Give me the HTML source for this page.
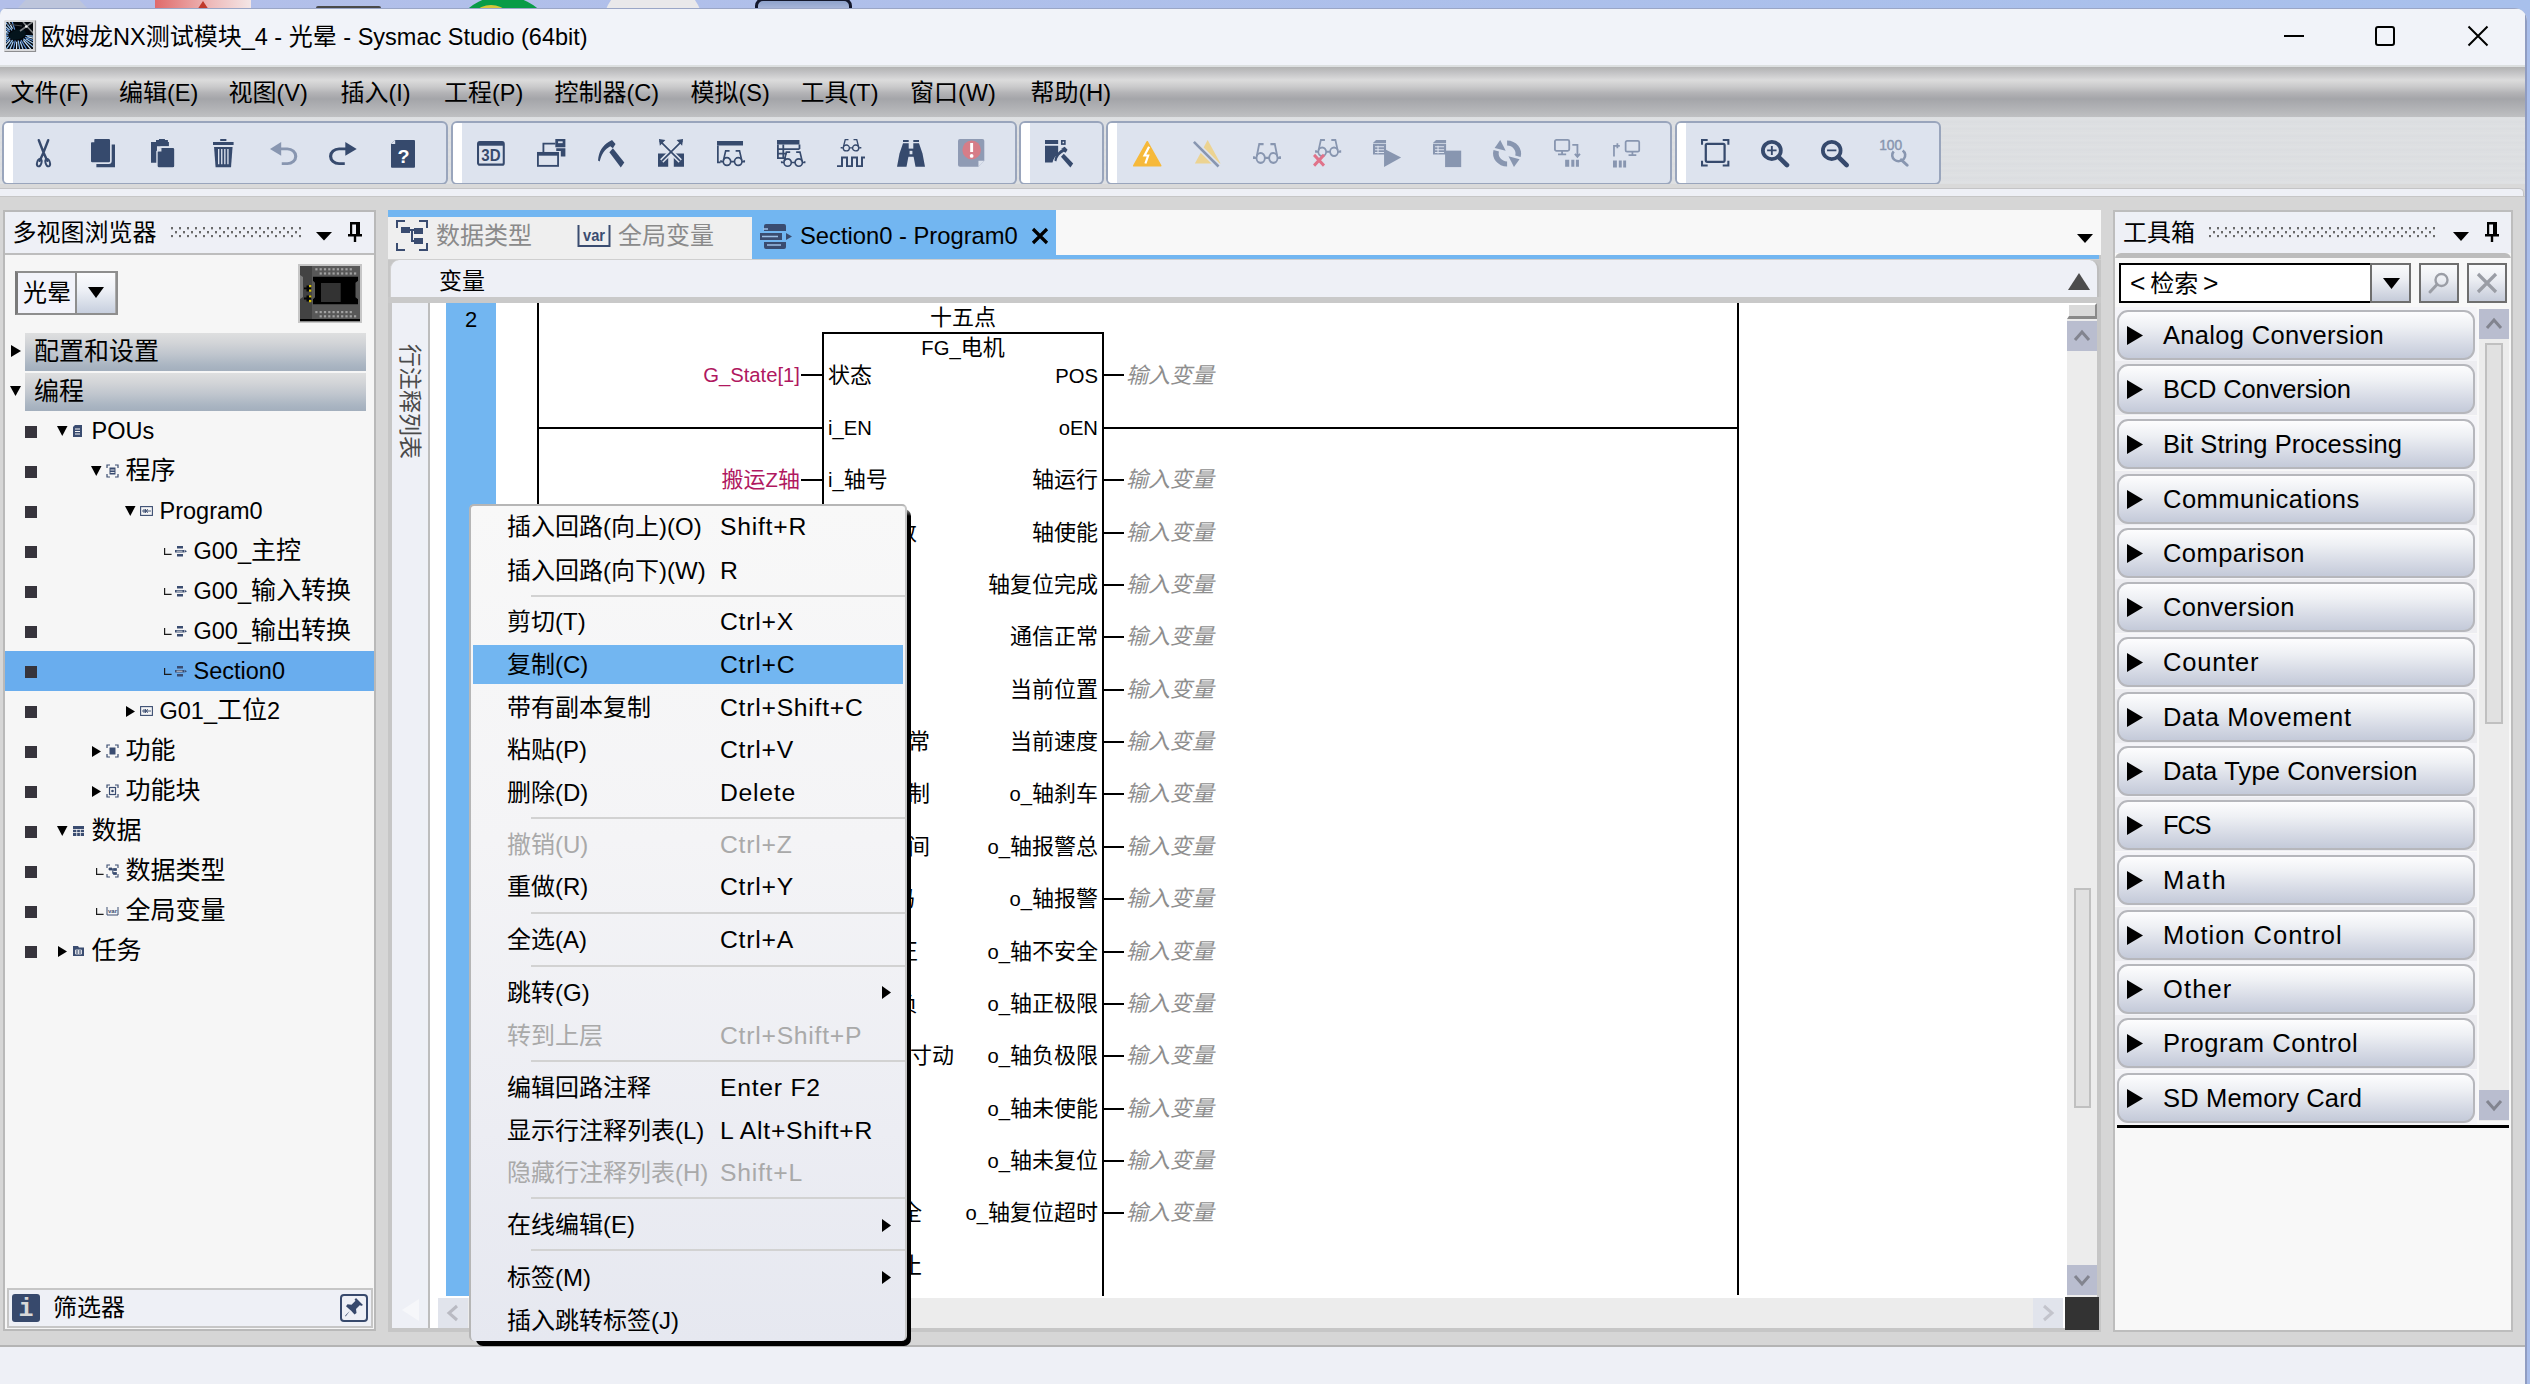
<!DOCTYPE html><html lang="zh-CN"><head><meta charset="utf-8"><title>Sysmac Studio</title><style>
html,body{margin:0;padding:0}
body{width:2530px;height:1384px;overflow:hidden;position:relative;background:#a9bde9;font-family:"Liberation Sans","Noto Sans CJK SC",sans-serif;}
div,svg{position:absolute;box-sizing:border-box}
svg{overflow:visible}
.t{white-space:nowrap}
#win{left:0;top:0;width:2530px;height:1384px;clip-path:inset(8px 3px 0px 0px round 7px 13px 0 0);background:#d6d6d6}
</style></head><body><div style="left:0;top:0;width:2530px;height:10px;background:linear-gradient(90deg,#b3bfe9,#a8c0ec)"><div style="left:17px;top:0;width:71px;height:9px;background:#bdc5dc;clip-path:polygon(12% 0,88% 0,100% 100%,0 100%)"></div><div style="left:155px;top:0;width:96px;height:10px;background:linear-gradient(90deg,#e06a6a,#eebcbc 60%,#f3e6e6)"></div><div style="left:197px;top:1px;width:12px;height:9px;background:#c0392b;clip-path:polygon(50% 0,100% 100%,0 100%)"></div><div style="left:316px;top:6px;width:65px;height:4px;background:#4a4a4a;border-radius:2px 2px 0 0"></div><div style="left:449px;top:-3.600px;width:108px;height:108px;background:#089c47;border-radius:50%"></div><div style="left:466px;top:5px;width:50px;height:50px;background:#d6c63a;border-radius:50%"></div><div style="left:601.500px;top:-22px;width:102px;height:102px;background:#e9e8ea;border-radius:50%"></div><div style="left:755px;top:-2px;width:97px;height:30px;background:linear-gradient(#8ea2cb,#a9b7db 8px);border:3px solid #14182c;border-radius:8px"></div></div><div id="win"><div style="left:0px;top:8px;width:2530px;height:1px;background:#9aa6c6"></div><div style="left:0px;top:9px;width:2530px;height:57px;background:#f1f3f9"></div><svg style="left:4px;top:20px" width="32" height="32" viewBox="0 0 32 32"><rect x="0" y="0" width="32" height="32" rx="1.500" fill="#d9d9db"/><path d="M0.500 31.500H31.500V0.500" fill="none" stroke="#8e8e90" stroke-width="1.200"/><clipPath id="apc"><rect x="2" y="2" width="27" height="27"/></clipPath><g clip-path="url(#apc)"><rect x="2" y="2" width="27" height="27" fill="#03060c"/><path d="M21.7 15.5L42.9 17.1" stroke="#8fc0f2" stroke-width="1.2"/><path d="M23.3 16.7L42.0 21.0" stroke="#cfe6fb" stroke-width="1.2"/><path d="M21.0 17.3L40.4 24.8" stroke="#5f92d8" stroke-width="1.2"/><path d="M21.8 18.8L37.9 28.4" stroke="#a9d0f5" stroke-width="1.2"/><path d="M19.4 18.8L34.8 31.5" stroke="#8fc0f2" stroke-width="1.2"/><path d="M19.4 20.4L31.1 34.2" stroke="#cfe6fb" stroke-width="1.2"/><path d="M17.0 20.0L26.8 36.3" stroke="#5f92d8" stroke-width="1.2"/><path d="M16.2 21.5L22.2 37.9" stroke="#a9d0f5" stroke-width="1.2"/><path d="M14.2 20.5L17.3 38.8" stroke="#8fc0f2" stroke-width="1.2"/><path d="M12.7 21.8L12.3 39.0" stroke="#cfe6fb" stroke-width="1.2"/><path d="M11.3 20.5L7.3 38.6" stroke="#5f92d8" stroke-width="1.2"/><path d="M9.3 21.4L2.4 37.5" stroke="#a9d0f5" stroke-width="1.2"/><path d="M8.6 19.8L-2.1 35.7" stroke="#8fc0f2" stroke-width="1.2"/><path d="M6.2 20.2L-6.2 33.4" stroke="#cfe6fb" stroke-width="1.2"/><path d="M6.4 18.6L-9.8 30.6" stroke="#5f92d8" stroke-width="1.2"/><path d="M3.9 18.5L-12.7 27.4" stroke="#a9d0f5" stroke-width="1.2"/><path d="M4.9 17.0L-14.9 23.8" stroke="#8fc0f2" stroke-width="1.2"/><path d="M2.6 16.4L-16.4 19.9" stroke="#cfe6fb" stroke-width="1.2"/><path d="M4.3 15.2L-17.0 15.9" stroke="#5f92d8" stroke-width="1.2"/><path d="M2.5 14.1L-16.8 11.9" stroke="#a9d0f5" stroke-width="1.2"/><path d="M4.6 13.4L-15.7 8.0" stroke="#8fc0f2" stroke-width="1.2"/><path d="M3.5 12.0L-13.8 4.3" stroke="#cfe6fb" stroke-width="1.2"/><path d="M5.9 11.7L-11.2 0.8" stroke="#5f92d8" stroke-width="1.2"/><path d="M5.6 10.1L-7.9 -2.2" stroke="#a9d0f5" stroke-width="1.2"/><path d="M8.0 10.4L-4.0 -4.8" stroke="#8fc0f2" stroke-width="1.2"/><path d="M8.5 8.8L0.3 -6.8" stroke="#cfe6fb" stroke-width="1.2"/><path d="M10.7 9.6L5.0 -8.1" stroke="#5f92d8" stroke-width="1.2"/><ellipse cx="13.500" cy="14.500" rx="8.500" ry="5" fill="#04141c" transform="rotate(-15 13.500 14.500)"/><path d="M16 11L30 1M19 2L31 15" stroke="#7e8084" stroke-width="1.600"/><circle cx="22.300" cy="6.500" r="1.300" fill="#f2f2f2"/><path d="M3 4L18 6" stroke="#4a4c50" stroke-width="1"/></g></svg><div class="t" style="left:41px;top:19.0px;font-size:24px;line-height:36px;color:#000;">欧姆龙<span style="font-size:0.98em">NX</span>测试模块<span style="font-size:0.98em">_4 - </span>光晕<span style="font-size:0.98em"> - Sysmac Studio (64bit)</span></div><div style="left:2284px;top:35px;width:20px;height:2px;background:#000"></div><div style="left:2375px;top:26px;width:20px;height:20px;border:2px solid #000;border-radius:3px"></div><svg style="left:2467px;top:25px;" width="22" height="22" viewBox="0 0 22 22"><path d="M1.5 1.5L20.5 20.5M20.5 1.5L1.5 20.5" stroke="#000" stroke-width="2" fill="none"/></svg><div style="left:0px;top:65px;width:2530px;height:2px;background:#dcdfe0"></div><div style="left:0px;top:67px;width:2530px;height:50px;background:linear-gradient(#b2b2b2 0%,#c4c4c6 12%,#dcdcdc 26%,#c9c9ca 40%,#b3b3b6 52%,#a4a5a9 64%,#b1b2b5 82%,#bfc0c2 100%)"></div><div class="t" style="left:10.5px;top:75.0px;font-size:24px;line-height:36px;color:#000;">文件<span style="font-size:0.98em">(F)</span></div><div class="t" style="left:119px;top:75.0px;font-size:24px;line-height:36px;color:#000;">编辑<span style="font-size:0.98em">(E)</span></div><div class="t" style="left:228.5px;top:75.0px;font-size:24px;line-height:36px;color:#000;">视图<span style="font-size:0.98em">(V)</span></div><div class="t" style="left:340.5px;top:75.0px;font-size:24px;line-height:36px;color:#000;">插入<span style="font-size:0.98em">(I)</span></div><div class="t" style="left:444px;top:75.0px;font-size:24px;line-height:36px;color:#000;">工程<span style="font-size:0.98em">(P)</span></div><div class="t" style="left:554.5px;top:75.0px;font-size:24px;line-height:36px;color:#000;">控制器<span style="font-size:0.98em">(C)</span></div><div class="t" style="left:690.5px;top:75.0px;font-size:24px;line-height:36px;color:#000;">模拟<span style="font-size:0.98em">(S)</span></div><div class="t" style="left:800.5px;top:75.0px;font-size:24px;line-height:36px;color:#000;">工具<span style="font-size:0.98em">(T)</span></div><div class="t" style="left:910px;top:75.0px;font-size:24px;line-height:36px;color:#000;">窗口<span style="font-size:0.98em">(W)</span></div><div class="t" style="left:1030.5px;top:75.0px;font-size:24px;line-height:36px;color:#000;">帮助<span style="font-size:0.98em">(H)</span></div><div style="left:0px;top:117px;width:2530px;height:71px;background:repeating-linear-gradient(180deg,#dcdee1 0,#dfe1e3 2px,#dbdde0 5px,#dee0e2 7px)"></div><div style="left:2px;top:121px;width:446px;height:64px;background:#dde3ee;border:2px solid #99a5bc;border-radius:6px;overflow:hidden"><div style="left:0;top:0;width:9px;height:60px;background:#fff"></div></div><div style="left:451px;top:121px;width:566px;height:64px;background:#dde3ee;border:2px solid #99a5bc;border-radius:6px;overflow:hidden"><div style="left:0;top:0;width:9px;height:60px;background:#fff"></div></div><div style="left:1019px;top:121px;width:85px;height:64px;background:#dde3ee;border:2px solid #99a5bc;border-radius:6px;overflow:hidden"><div style="left:0;top:0;width:9px;height:60px;background:#fff"></div></div><div style="left:1106px;top:121px;width:566px;height:64px;background:#dde3ee;border:2px solid #99a5bc;border-radius:6px;overflow:hidden"><div style="left:0;top:0;width:9px;height:60px;background:#fff"></div></div><div style="left:1675px;top:121px;width:266px;height:64px;background:#dde3ee;border:2px solid #99a5bc;border-radius:6px;overflow:hidden"><div style="left:0;top:0;width:9px;height:60px;background:#fff"></div></div><svg style="left:35.5px;top:139px" width="15.0" height="28.3" viewBox="10.0 2.7 16.0 30.2" preserveAspectRatio="none"><path d="M13 4 L18 17 L23 4 M18 17 L14 26 M18 17 L22 26" stroke="#364a6d" stroke-width="2.6" fill="none" stroke-linecap="round"/><ellipse cx="13.5" cy="28" rx="2.3" ry="4" fill="none" stroke="#364a6d" stroke-width="2" transform="rotate(18 13.5 28)"/><ellipse cx="22.5" cy="28" rx="2.3" ry="4" fill="none" stroke="#364a6d" stroke-width="2" transform="rotate(-18 22.5 28)"/></svg><svg style="left:91px;top:139px" width="24" height="28.3" viewBox="6.8 4.8 23.2 27.2" preserveAspectRatio="none"><path d="M12 10h18v22H12z" fill="#364a6d"/><path d="M10 4h14a2 2 0 0 1 2 2v20a2 2 0 0 1-2 2H8a2 2 0 0 1-2-2V8z" fill="#364a6d" stroke="#dde3ee" stroke-width="1.6"/><path d="M6 8l4-4v4z" fill="#dde3ee"/></svg><svg style="left:151.3px;top:139px" width="23.2" height="28.3" viewBox="6.0 4.0 23.3 27.3" preserveAspectRatio="none"><path d="M6 7h5V5h3V4h6v1h3v2h1v4H6z" fill="#364a6d"/><path d="M6 7h6v20H6z" fill="#364a6d"/><path d="M16 12h12a2 2 0 0 1 2 2v16a2 2 0 0 1-2 2H14a2 2 0 0 1-2-2V16z" fill="#364a6d" stroke="#dde3ee" stroke-width="1.4"/><path d="M12.5 16l4-4v4z" fill="#dde3ee"/></svg><svg style="left:212.7px;top:139px" width="20.6" height="28.3" viewBox="8.0 4.0 20.0 28.0" preserveAspectRatio="none"><path d="M8 7h20v3H8zM15 4h6v2h-6z" fill="#364a6d"/><path d="M9 12h18l-1.5 20h-15z" fill="#364a6d"/><path d="M13.5 14v15M16.5 14v15M19.5 14v15M22.5 14v15" stroke="#dde3ee" stroke-width="1.3"/></svg><svg style="left:270px;top:142.4px" width="27.3" height="23.1" viewBox="4.5 5.0 24.4 23.4" preserveAspectRatio="none"><path d="M13 12h7a7.500 7.500 0 0 1 0 15h-5" fill="none" stroke="#8896b0" stroke-width="2.800"/><path d="M4.500 12l10-7v14z" fill="#8896b0"/></svg><svg style="left:328.7px;top:142.4px" width="27.7" height="23.1" viewBox="7.1 5.0 24.4 23.4" preserveAspectRatio="none"><path d="M23 12h-7a7.500 7.500 0 0 0 0 15h5" fill="none" stroke="#364a6d" stroke-width="2.800"/><path d="M31.500 12l-10-7v14z" fill="#364a6d"/></svg><svg style="left:391px;top:139.6px" width="24" height="27.7" viewBox="6.0 4.0 23.0 28.0" preserveAspectRatio="none"><path d="M10 4h18a1 1 0 0 1 1 1v26a1 1 0 0 1-1 1H7a1 1 0 0 1-1-1V8z" fill="#364a6d"/><path d="M6 8l4-4v4z" fill="#dde3ee"/><text x="18" y="27" font-family="Liberation Sans,sans-serif" font-weight="bold" font-size="19" fill="#fff" text-anchor="middle">?</text></svg><svg style="left:477px;top:141.2px" width="27.8" height="24.8" viewBox="1.8 4.8 32.400000000000006 27.400000000000002" preserveAspectRatio="none"><rect x="3" y="6" width="30" height="25" rx="2" fill="none" stroke="#364a6d" stroke-width="2.4"/><rect x="3" y="6" width="30" height="4" fill="#364a6d"/><text x="18" y="27" font-family="Liberation Sans,sans-serif" font-weight="bold" font-size="17.500" fill="#364a6d" text-anchor="middle">3D</text></svg><svg style="left:536.8px;top:139.4px" width="28.4" height="27.8" viewBox="4.0 3.0 31.0 30.0" preserveAspectRatio="none"><path d="M24 3h11v9H24z M25 13h10v9h-5v-6h-5z" fill="#364a6d"/><rect x="27" y="5.5" width="5" height="2" fill="#dde3ee"/><path d="M11 17V8h13" fill="none" stroke="#364a6d" stroke-width="2"/><rect x="5" y="18" width="22" height="14" fill="#dde3ee" stroke="#364a6d" stroke-width="2"/><rect x="5" y="18" width="22" height="3" fill="#364a6d"/></svg><svg style="left:597.7px;top:139.6px" width="26.3" height="27.6" viewBox="5.0 3.0 30.0 27.0" preserveAspectRatio="none"><path d="M17 5l4-2 4 4-3 4-3-2c-6 3-10 7-12 15l-2-1C6 14 10 9 17 5z" fill="#364a6d"/><path d="M18 15l4-4 13 14-4 5z" fill="#364a6d"/></svg><svg style="left:658px;top:139.4px" width="26" height="27.8" viewBox="4.0 3.0 28.0 29.0" preserveAspectRatio="none"><path d="M4 18h11v14H4zM21 18h11v14H21z" fill="#364a6d"/><path d="M8 26L30 5M28 26L6 5" stroke="#dde3ee" stroke-width="5" fill="none"/><path d="M8 26L30 5M28 26L6 5" stroke="#364a6d" stroke-width="1.8" fill="none"/><path d="M31 3l-1 7-6-6zM5 3l1 7 6-6z" fill="#364a6d"/></svg><svg style="left:716.9px;top:141px" width="28.1" height="25.3" viewBox="3.0 5.0 32.4 28.299999999999997" preserveAspectRatio="none"><path d="M3 5h30v5H3z" fill="#364a6d"/><path d="M4 10v19h3" fill="none" stroke="#364a6d" stroke-width="2"/><g transform="translate(21 24) scale(1.0)" fill="none" stroke="#364a6d" stroke-width="1.9"><circle cx="-6.5" cy="4" r="4.3"/><circle cx="6.5" cy="4" r="4.3"/><path d="M-2.2 4h4.4M-10.8 4h-2.6v-1.5M10.8 4h2.6v-1.5M-10.5 2.5L-8 -8h4.5M10.5 2.5L8 -8h-4.5"/></g></svg><svg style="left:776.7px;top:139.9px" width="28.5" height="27.1" viewBox="3.0 4.0 31.700000000000003 29.799999999999997" preserveAspectRatio="none"><path d="M3 4h25v5H3z" fill="#364a6d"/><path d="M4 9v15h9M4 14h24M4 19h10M10 9v15M28 9v5" fill="none" stroke="#364a6d" stroke-width="2"/><g transform="translate(21 25) scale(0.95)" fill="none" stroke="#364a6d" stroke-width="1.9"><circle cx="-6.5" cy="4" r="4.3"/><circle cx="6.5" cy="4" r="4.3"/><path d="M-2.2 4h4.4M-10.8 4h-2.6v-1.5M10.8 4h2.6v-1.5M-10.5 2.5L-8 -8h4.5M10.5 2.5L8 -8h-4.5"/></g></svg><svg style="left:837px;top:138.9px" width="28" height="28.1" viewBox="4.0 2.5 28.0 29.5" preserveAspectRatio="none"><g transform="translate(18 9) scale(0.72)" fill="none" stroke="#364a6d" stroke-width="1.9"><circle cx="-6.5" cy="4" r="4.3"/><circle cx="6.5" cy="4" r="4.3"/><path d="M-2.2 4h4.4M-10.8 4h-2.6v-1.5M10.8 4h2.6v-1.5M-10.5 2.5L-8 -8h4.5M10.5 2.5L8 -8h-4.5"/></g><path d="M4 31h5v-9h5v9h5v-9h5v9h5v-9h3" fill="none" stroke="#364a6d" stroke-width="2"/></svg><svg style="left:897px;top:139.9px" width="28" height="26.8" viewBox="4.0 4.0 28.0 28.0" preserveAspectRatio="none"><path d="M10 4h5.700v2H10zM20.300 4H26v2h-5.700z" fill="#364a6d"/><path d="M10 7.500h5.700V20L13.500 32H4l2.500-14zM26 7.500h-5.700V20L22.500 32H32l-2.500-14z" fill="#364a6d"/><rect x="15" y="13" width="6" height="8.500" fill="#364a6d"/><rect x="16.600" y="15.300" width="2.800" height="3.600" fill="#dde3ee"/></svg><svg style="left:957.7px;top:139.2px" width="26.3" height="27.8" viewBox="4.0 4.0 27.0 28.0" preserveAspectRatio="none"><path d="M6 4h23a2 2 0 0 1 2 2v20l-6 6H6a2 2 0 0 1-2-2V6a2 2 0 0 1 2-2z" fill="#8f9bb4"/><path d="M25 32v-6h6z" fill="#dde3ee"/><circle cx="18" cy="15" r="9.5" fill="#d67d88"/><path d="M18 8v9" stroke="#fff" stroke-width="3"/><circle cx="18" cy="21" r="1.9" fill="#fff"/></svg><svg style="left:1044.8px;top:139.6px" width="28.2" height="27.4" viewBox="5.0 4.0 30.0 28.0" preserveAspectRatio="none"><path d="M5 4h14v4H5zM5 10h14v8c-3 2-5 5-6 9H5z" fill="#364a6d"/><rect x="22" y="4" width="5" height="5" fill="#364a6d"/><rect x="23.7" y="5.7" width="1.6" height="1.6" fill="#dde3ee"/><path d="M22 13l4-2 3 3-2 3-2-1c-4 2-7 5-8 10l-2-1c1-6 4-9 9-12z" fill="#364a6d"/><path d="M22 21l3-3 10 10-3 4z" fill="#364a6d"/></svg><svg style="left:1132.7px;top:140.6px" width="28.5" height="25.6" viewBox="2.5 2.5 31.0 29.0" preserveAspectRatio="none"><path d="M18 3.5L32.5 30.5H3.5z" fill="#f6b93a" stroke="#f6b93a" stroke-width="2" stroke-linejoin="round"/><path d="M20 9l-5 10h4l-3 9" stroke="#fff" stroke-width="2.4" fill="none"/></svg><svg style="left:1193.2px;top:139.6px" width="27.5" height="27.4" viewBox="4.1 3.1 27.9 27.799999999999997" preserveAspectRatio="none"><path d="M19 3L32 27H6z" fill="#ecd391"/><path d="M4 4L30 30" stroke="#dde3ee" stroke-width="6"/><path d="M5 5L30 30" stroke="#8896b0" stroke-width="2.6"/></svg><svg style="left:1253px;top:142.8px" width="28" height="21.0" viewBox="-1.4 3.9 38.8 24.6" preserveAspectRatio="none"><g transform="translate(18 16) scale(1.35)" fill="none" stroke="#8896b0" stroke-width="1.9"><circle cx="-6.5" cy="4" r="4.3"/><circle cx="6.5" cy="4" r="4.3"/><path d="M-2.2 4h4.4M-10.8 4h-2.6v-1.5M10.8 4h2.6v-1.5M-10.5 2.5L-8 -8h4.5M10.5 2.5L8 -8h-4.5"/></g></svg><svg style="left:1312.7px;top:139.2px" width="28.2" height="27.8" viewBox="3.7 1.1 34.099999999999994 31.199999999999996" preserveAspectRatio="none"><g transform="translate(22 11) scale(1.1)" fill="none" stroke="#8896b0" stroke-width="1.9"><circle cx="-6.5" cy="4" r="4.3"/><circle cx="6.5" cy="4" r="4.3"/><path d="M-2.2 4h4.4M-10.8 4h-2.6v-1.5M10.8 4h2.6v-1.5M-10.5 2.5L-8 -8h4.5M10.5 2.5L8 -8h-4.5"/></g><path d="M5 19l12 12M17 19L5 31" stroke="#e0738a" stroke-width="3.6"/></svg><svg style="left:1372.9px;top:139.9px" width="28.1" height="27.1" viewBox="5.0 3.0 28.0 28.0" preserveAspectRatio="none"><path d="M8 3h10v3H8zM5 6l3-3v3zM5 7h13v11H5z" fill="#8896b0"/><path d="M7 10h9M7 13h9M7 16h9M10 9v8" stroke="#dde3ee" stroke-width="1.1"/><path d="M16 12l17 9-17 10z" fill="#8896b0"/></svg><svg style="left:1433px;top:139.9px" width="28.2" height="27.1" viewBox="5.0 3.0 28.0 28.0" preserveAspectRatio="none"><path d="M8 3h10v3H8zM5 6l3-3v3zM5 7h13v11H5z" fill="#8896b0"/><path d="M7 10h9M7 13h9M7 16h9M10 9v8" stroke="#dde3ee" stroke-width="1.1"/><rect x="17" y="14" width="16" height="17" fill="#8896b0"/></svg><svg style="left:1492.8px;top:139.9px" width="28.2" height="27.1" viewBox="5.0 4.4 26.0 27.200000000000003" preserveAspectRatio="none"><path d="M18 5a13 13 0 0 1 12.5 16.500l-5-1.500A8 8 0 0 0 18 10z" fill="#8896b0"/><path d="M18 3v12l-8-7z" fill="#8896b0" transform="rotate(-25 18 18)"/><path d="M18 31a13 13 0 0 1-12.500-16.500l5 1.500A8 8 0 0 0 18 26z" fill="#8896b0"/><path d="M18 33v-12l8 7z" fill="#8896b0" transform="rotate(-25 18 18)"/></svg><svg style="left:1553.7px;top:139.2px" width="26.7" height="27.8" viewBox="2.1 3.1 26.099999999999998 27.9" preserveAspectRatio="none"><rect x="3" y="4" width="14" height="11" rx="1.5" fill="none" stroke="#8896b0" stroke-width="1.8"/><path d="M6 18.5h8M10 15v3" stroke="#8896b0" stroke-width="1.8"/><path d="M13 24h4v7h-4zM19 24h3v7h-3zM23.5 24h3v7h-3z" fill="#8896b0"/><path d="M20 9h5v11M22.500 18l2.500 3 2.500-3" fill="none" stroke="#8896b0" stroke-width="1.8"/></svg><svg style="left:1613.4px;top:139.6px" width="27.1" height="27.4" viewBox="5.0 3.1 27.9 27.9" preserveAspectRatio="none"><rect x="18" y="4" width="14" height="11" rx="1.5" fill="none" stroke="#8896b0" stroke-width="1.8"/><path d="M21 18.5h8M25 15v3" stroke="#8896b0" stroke-width="1.8"/><path d="M5 24h4v7h-4zM11 24h3v7h-3zM15.5 24h3v7h-3z" fill="#8896b0"/><path d="M6 20V9h6M9.500 6.500v5" fill="none" stroke="#8896b0" stroke-width="1.8"/></svg><svg style="left:1700.8px;top:139.4px" width="28.4" height="27.6" viewBox="2.9 3.9 30.200000000000003 29.200000000000003" preserveAspectRatio="none"><rect x="8" y="9" width="20" height="19" rx="1.5" fill="none" stroke="#364a6d" stroke-width="2.4"/><path d="M4 10V5h6M26 5h6v5M32 27v5h-6M10 32H4v-5" fill="none" stroke="#364a6d" stroke-width="2.2"/></svg><svg style="left:1761px;top:139.7px" width="28.3" height="27.3" viewBox="3.5 2.5 30.0 30.0" preserveAspectRatio="none"><circle cx="15" cy="14" r="9.5" fill="none" stroke="#364a6d" stroke-width="4"/><path d="M22 21l9 9" stroke="#364a6d" stroke-width="5" stroke-linecap="round"/><path d="M10 14h10M15 9v10" stroke="#364a6d" stroke-width="2"/></svg><svg style="left:1821px;top:139.7px" width="28" height="27.3" viewBox="3.5 2.5 30.0 30.0" preserveAspectRatio="none"><circle cx="15" cy="14" r="9.5" fill="none" stroke="#364a6d" stroke-width="4"/><path d="M22 21l9 9" stroke="#364a6d" stroke-width="5" stroke-linecap="round"/><path d="M10 14h10" stroke="#364a6d" stroke-width="2"/></svg><svg style="left:1880.3px;top:139.4px" width="28.7" height="27.6" viewBox="3.8 3.6 28.7 29.9" preserveAspectRatio="none"><text x="3" y="15" font-family="Liberation Sans,sans-serif" font-size="16" fill="#8896b0" stroke="#8896b0" stroke-width=".500" textLength="23" lengthAdjust="spacingAndGlyphs">100</text><path d="M17.500 17a6.500 6.500 0 1 0 9-1" fill="none" stroke="#8896b0" stroke-width="2.6"/><path d="M25 26l6 6" stroke="#8896b0" stroke-width="3" stroke-linecap="round"/></svg><div style="left:0px;top:184px;width:2530px;height:5px;background:#d9d9d9"></div><div style="left:0px;top:188px;width:2524px;height:9px;background:#eef0f6;border-radius:0 5px 0 0;border-top:1px solid #c4c4c6;border-right:1px solid #c4c4c6"></div><div style="left:0px;top:196px;width:2530px;height:1px;background:#c6c6c6"></div><div style="left:0px;top:197px;width:2530px;height:1200px;background:#d6d6d6"></div><div style="left:0px;top:1345px;width:2530px;height:2px;background:#b4b4b4"></div><div style="left:0px;top:1347px;width:2530px;height:40px;background:#eef0f6"></div><div style="left:2525px;top:9px;width:2px;height:1380px;background:#8f9cc2"></div><div style="left:3px;top:210px;width:373px;height:1121px;background:#f6f6f6;border:2px solid #b9b9b9"></div><div style="left:5px;top:212px;width:369px;height:41px;background:#eef0f6"></div><div style="left:5px;top:253px;width:369px;height:2px;background:#bdbdbd"></div><div class="t" style="left:12.5px;top:214.5px;font-size:24px;line-height:36px;color:#000;">多视图浏览器</div><svg style="left:171px;top:227.4px" width="130" height="11" viewBox="0 0 130 11"><defs><pattern id="dp171" width="8" height="8" patternUnits="userSpaceOnUse"><rect x="0" y="0" width="2" height="2.400" fill="#6a6a6a"/><rect x="4" y="4" width="2" height="2.400" fill="#6a6a6a"/></pattern></defs><rect width="130" height="10.400" fill="url(#dp171)"/></svg><svg style="left:316.0px;top:231.75px" width="16" height="8.5" viewBox="0 0 16 8.5"><path d="M0 0H16L8.0 8.5z" fill="#000"/></svg><svg style="left:347px;top:221px" width="16" height="22" viewBox="0 0 16 22"><path d="M3 1h10v12h2v2.500H9.200V21H6.800v-5.500H1V13h2z" fill="#000"/><rect x="5.200" y="3.500" width="3.800" height="9.500" fill="#eef0f6"/></svg><div style="left:15px;top:271px;width:103px;height:44px;background:#f2f3fa;border:2px solid #8e8e8e;border-left:3px solid #7a7a7a"></div><div style="left:75px;top:273px;width:41px;height:40px;background:linear-gradient(#fbfbfd,#eceff5 45%,#c7cfde);border-left:2px solid #8e8e8e;border-right:1px solid #aaa"></div><div class="t" style="left:23px;top:274.5px;font-size:24px;line-height:36px;color:#000;">光晕</div><svg style="left:88.0px;top:287.0px" width="16" height="11" viewBox="0 0 16 11"><path d="M0 0H16L8.0 11z" fill="#000"/></svg><svg style="left:298px;top:264px" width="64" height="59" viewBox="0 0 64 59"><rect x="0" y="0" width="64" height="59" fill="#c6c6c6"/><rect x="2" y="2" width="60" height="55" fill="#585858"/><rect x="2" y="2" width="12" height="55" fill="#434343"/><path d="M2 10l3 2v20l-3 2z" transform="translate(0 1) scale(1 1.000)" fill="#7c7c7c"/><rect x="17.3" y="4.2" width="2.200" height="2.200" fill="#a2a2a2"/><rect x="21.6" y="4.2" width="2.200" height="2.200" fill="#a2a2a2"/><rect x="25.9" y="4.2" width="2.200" height="2.200" fill="#a2a2a2"/><rect x="30.2" y="4.2" width="2.200" height="2.200" fill="#a2a2a2"/><rect x="34.5" y="4.2" width="2.200" height="2.200" fill="#a2a2a2"/><rect x="38.8" y="4.2" width="2.200" height="2.200" fill="#a2a2a2"/><rect x="43.1" y="4.2" width="2.200" height="2.200" fill="#a2a2a2"/><rect x="47.4" y="4.2" width="2.200" height="2.200" fill="#a2a2a2"/><rect x="51.7" y="4.2" width="2.200" height="2.200" fill="#a2a2a2"/><rect x="21.6" y="8.4" width="2.200" height="2.200" fill="#a2a2a2"/><rect x="25.9" y="8.4" width="2.200" height="2.200" fill="#a2a2a2"/><rect x="30.2" y="8.4" width="2.200" height="2.200" fill="#a2a2a2"/><rect x="34.5" y="8.4" width="2.200" height="2.200" fill="#a2a2a2"/><rect x="38.8" y="8.4" width="2.200" height="2.200" fill="#a2a2a2"/><rect x="43.1" y="8.4" width="2.200" height="2.200" fill="#a2a2a2"/><rect x="47.4" y="8.4" width="2.200" height="2.200" fill="#a2a2a2"/><rect x="51.7" y="8.4" width="2.200" height="2.200" fill="#a2a2a2"/><rect x="56.0" y="8.4" width="2.200" height="2.200" fill="#a2a2a2"/><rect x="17.3" y="47" width="2.200" height="2.200" fill="#a2a2a2"/><rect x="21.6" y="47" width="2.200" height="2.200" fill="#a2a2a2"/><rect x="25.9" y="47" width="2.200" height="2.200" fill="#a2a2a2"/><rect x="30.2" y="47" width="2.200" height="2.200" fill="#a2a2a2"/><rect x="34.5" y="47" width="2.200" height="2.200" fill="#a2a2a2"/><rect x="38.8" y="47" width="2.200" height="2.200" fill="#a2a2a2"/><rect x="43.1" y="47" width="2.200" height="2.200" fill="#a2a2a2"/><rect x="47.4" y="47" width="2.200" height="2.200" fill="#a2a2a2"/><rect x="51.7" y="47" width="2.200" height="2.200" fill="#a2a2a2"/><rect x="21.6" y="51.2" width="2.200" height="2.200" fill="#a2a2a2"/><rect x="25.9" y="51.2" width="2.200" height="2.200" fill="#a2a2a2"/><rect x="30.2" y="51.2" width="2.200" height="2.200" fill="#a2a2a2"/><rect x="34.5" y="51.2" width="2.200" height="2.200" fill="#a2a2a2"/><rect x="38.8" y="51.2" width="2.200" height="2.200" fill="#a2a2a2"/><rect x="43.1" y="51.2" width="2.200" height="2.200" fill="#a2a2a2"/><rect x="47.4" y="51.2" width="2.200" height="2.200" fill="#a2a2a2"/><rect x="51.7" y="51.2" width="2.200" height="2.200" fill="#a2a2a2"/><rect x="56.0" y="51.2" width="2.200" height="2.200" fill="#a2a2a2"/><path d="M15 12.700h45v4l-2.500 2v14.500l2.500 2v5H15v-5l2-2V18.700l-2-2z" fill="#000"/><rect x="23" y="19" width="19.700" height="19" fill="#333"/><rect x="2" y="55" width="60" height="2.300" fill="#000"/><rect x="11" y="21" width="2.300" height="2.200" fill="#d8c100"/><rect x="11" y="25.5" width="2.300" height="2.200" fill="#d8c100"/><rect x="11" y="31.5" width="2.300" height="2.200" fill="#d8c100"/><rect x="11" y="36" width="2.300" height="2.200" fill="#d8c100"/><path d="M6 23.500h7v1.800H6zM8.500 21.500h2.500v6H8.500zM6 33.600h7v1.800H6zM8.500 31.500h2.500v6H8.500z" fill="#050505"/></svg><div style="left:24.5px;top:332.5px;width:341px;height:38.5px;background:linear-gradient(#dedfe0 0%,#d3d5d8 25%,#c0c6ce 55%,#aab5c2 85%,#a3afbd 100%)"></div><div style="left:24.5px;top:372.5px;width:341px;height:38.5px;background:linear-gradient(#dedfe0 0%,#d3d5d8 25%,#c0c6ce 55%,#aab5c2 85%,#a3afbd 100%)"></div><div class="t" style="left:34px;top:332.0px;font-size:25px;line-height:38px;color:#000;">配置和设置</div><div class="t" style="left:34px;top:372.0px;font-size:25px;line-height:38px;color:#000;">编程</div><svg style="left:10.5px;top:345.0px" width="10" height="12" viewBox="0 0 10 12"><path d="M0 0V12L10 6.0z" fill="#000"/></svg><svg style="left:10.0px;top:386.0px" width="11" height="10" viewBox="0 0 11 10"><path d="M0 0H11L5.5 10z" fill="#000"/></svg><div style="left:25px;top:426px;width:12px;height:12px;background:#36343c"></div><svg style="left:57.25px;top:426.0px" width="10.5" height="10" viewBox="0 0 10.5 10"><path d="M0 0H10.5L5.25 10z" fill="#000"/></svg><svg style="left:72px;top:424px" width="13" height="14" viewBox="0 0 13 14"><path d="M3 1h7v12H1V3z" fill="#3a4c70"/><path d="M3 5h5M3 7.500h5M3 10h5" stroke="#f6f6f6" stroke-width="1"/></svg><div class="t" style="left:91.5px;top:411.0px;font-size:25px;line-height:38px;color:#000;"><span style="font-size:0.94em">POUs</span></div><div style="left:25px;top:466px;width:12px;height:12px;background:#36343c"></div><svg style="left:91.25px;top:466.0px" width="10.5" height="10" viewBox="0 0 10.5 10"><path d="M0 0H10.5L5.25 10z" fill="#000"/></svg><svg style="left:106px;top:464px" width="13" height="14" viewBox="0 0 13 14"><path d="M1 4V1h3M9 1h3v3M12 10v3H9M4 13H1v-3" fill="none" stroke="#3a4c70" stroke-width="1.2"/><rect x="3.500" y="3.500" width="6" height="7" fill="#3a4c70"/><path d="M4.500 6h4M4.500 8.500h4" stroke="#f6f6f6" stroke-width=".9"/></svg><div class="t" style="left:125.5px;top:451.0px;font-size:25px;line-height:38px;color:#000;">程序</div><div style="left:25px;top:506px;width:12px;height:12px;background:#36343c"></div><svg style="left:125.25px;top:506.0px" width="10.5" height="10" viewBox="0 0 10.5 10"><path d="M0 0H10.5L5.25 10z" fill="#000"/></svg><svg style="left:140px;top:504px" width="13" height="14" viewBox="0 0 13 14"><rect x=".6" y="2.600" width="11.800" height="8.800" fill="#f6f6f6" stroke="#3a4c70" stroke-width="1.100"/><path d="M2 7h9M4 5v4M5.500 5v4M8 5.500a1.500 1.500 0 1 0 0 3" stroke="#3a4c70" stroke-width=".9" fill="none"/></svg><div class="t" style="left:159.5px;top:491.0px;font-size:25px;line-height:38px;color:#000;"><span style="font-size:0.94em">Program0</span></div><div style="left:25px;top:546px;width:12px;height:12px;background:#36343c"></div><svg style="left:163.5px;top:547.5px" width="9" height="8" viewBox="0 0 9 8"><path d="M0.600 0v6.400h7" stroke="#1c1c1c" stroke-width="1.200" fill="none"/></svg><svg style="left:174px;top:544px" width="13" height="14" viewBox="0 0 13 14"><path d="M3 2h6v2.500H3zM1 6h9v2.500H1zM3 10h6v2.500H3z" fill="#3a4c70"/><path d="M13 7.200l-2.500 1.500v-3z" fill="#3a4c70"/><path d="M2.500 7.200h6" stroke="#f6f6f6" stroke-width=".8"/></svg><div class="t" style="left:193.5px;top:531.0px;font-size:25px;line-height:38px;color:#000;"><span style="font-size:0.94em">G00_</span>主控</div><div style="left:25px;top:586px;width:12px;height:12px;background:#36343c"></div><svg style="left:163.5px;top:587.5px" width="9" height="8" viewBox="0 0 9 8"><path d="M0.600 0v6.400h7" stroke="#1c1c1c" stroke-width="1.200" fill="none"/></svg><svg style="left:174px;top:584px" width="13" height="14" viewBox="0 0 13 14"><path d="M3 2h6v2.500H3zM1 6h9v2.500H1zM3 10h6v2.500H3z" fill="#3a4c70"/><path d="M13 7.200l-2.500 1.500v-3z" fill="#3a4c70"/><path d="M2.500 7.200h6" stroke="#f6f6f6" stroke-width=".8"/></svg><div class="t" style="left:193.5px;top:571.0px;font-size:25px;line-height:38px;color:#000;"><span style="font-size:0.94em">G00_</span>输入转换</div><div style="left:25px;top:626px;width:12px;height:12px;background:#36343c"></div><svg style="left:163.5px;top:627.5px" width="9" height="8" viewBox="0 0 9 8"><path d="M0.600 0v6.400h7" stroke="#1c1c1c" stroke-width="1.200" fill="none"/></svg><svg style="left:174px;top:624px" width="13" height="14" viewBox="0 0 13 14"><path d="M3 2h6v2.500H3zM1 6h9v2.500H1zM3 10h6v2.500H3z" fill="#3a4c70"/><path d="M13 7.200l-2.500 1.500v-3z" fill="#3a4c70"/><path d="M2.500 7.200h6" stroke="#f6f6f6" stroke-width=".8"/></svg><div class="t" style="left:193.5px;top:611.0px;font-size:25px;line-height:38px;color:#000;"><span style="font-size:0.94em">G00_</span>输出转换</div><div style="left:5px;top:651px;width:369px;height:40px;background:#69adee"></div><div style="left:25px;top:666px;width:12px;height:12px;background:#36343c"></div><svg style="left:163.5px;top:667.5px" width="9" height="8" viewBox="0 0 9 8"><path d="M0.600 0v6.400h7" stroke="#1c1c1c" stroke-width="1.200" fill="none"/></svg><svg style="left:174px;top:664px" width="13" height="14" viewBox="0 0 13 14"><path d="M3 2h6v2.500H3zM1 6h9v2.500H1zM3 10h6v2.500H3z" fill="#3a4c70"/><path d="M13 7.200l-2.500 1.500v-3z" fill="#3a4c70"/><path d="M2.500 7.200h6" stroke="#f6f6f6" stroke-width=".8"/></svg><div class="t" style="left:193.5px;top:651.0px;font-size:25px;line-height:38px;color:#000;"><span style="font-size:0.94em">Section0</span></div><div style="left:25px;top:706px;width:12px;height:12px;background:#36343c"></div><svg style="left:126.0px;top:705.5px" width="9" height="11" viewBox="0 0 9 11"><path d="M0 0V11L9 5.5z" fill="#000"/></svg><svg style="left:140px;top:704px" width="13" height="14" viewBox="0 0 13 14"><rect x=".6" y="2.600" width="11.800" height="8.800" fill="#f6f6f6" stroke="#3a4c70" stroke-width="1.100"/><path d="M2 7h9M4 5v4M5.500 5v4M8 5.500a1.500 1.500 0 1 0 0 3" stroke="#3a4c70" stroke-width=".9" fill="none"/></svg><div class="t" style="left:159.5px;top:691.0px;font-size:25px;line-height:38px;color:#000;"><span style="font-size:0.94em">G01_</span>工位<span style="font-size:0.94em">2</span></div><div style="left:25px;top:746px;width:12px;height:12px;background:#36343c"></div><svg style="left:92.0px;top:745.5px" width="9" height="11" viewBox="0 0 9 11"><path d="M0 0V11L9 5.5z" fill="#000"/></svg><svg style="left:106px;top:744px" width="13" height="14" viewBox="0 0 13 14"><path d="M1 4V1h3M9 1h3v3M12 10v3H9M4 13H1v-3" fill="none" stroke="#3a4c70" stroke-width="1.200"/><rect x="3.500" y="3.500" width="6" height="7" fill="#3a4c70"/></svg><div class="t" style="left:125.5px;top:731.0px;font-size:25px;line-height:38px;color:#000;">功能</div><div style="left:25px;top:786px;width:12px;height:12px;background:#36343c"></div><svg style="left:92.0px;top:785.5px" width="9" height="11" viewBox="0 0 9 11"><path d="M0 0V11L9 5.5z" fill="#000"/></svg><svg style="left:106px;top:784px" width="13" height="14" viewBox="0 0 13 14"><path d="M1 4V1h3M9 1h3v3M12 10v3H9M4 13H1v-3" fill="none" stroke="#3a4c70" stroke-width="1.200"/><rect x="3.500" y="3.500" width="6" height="7" fill="none" stroke="#3a4c70" stroke-width="1.200"/><circle cx="6.500" cy="7" r="1.300" fill="#3a4c70"/></svg><div class="t" style="left:125.5px;top:771.0px;font-size:25px;line-height:38px;color:#000;">功能块</div><div style="left:25px;top:826px;width:12px;height:12px;background:#36343c"></div><svg style="left:57.25px;top:826.0px" width="10.5" height="10" viewBox="0 0 10.5 10"><path d="M0 0H10.5L5.25 10z" fill="#000"/></svg><svg style="left:72px;top:824px" width="13" height="14" viewBox="0 0 13 14"><rect x="1" y="2" width="11" height="10" fill="#3a4c70"/><path d="M1 5.500h11M1 8.500h11M4.700 5v7M8.400 5v7" stroke="#f6f6f6" stroke-width=".8"/></svg><div class="t" style="left:91.5px;top:811.0px;font-size:25px;line-height:38px;color:#000;">数据</div><div style="left:25px;top:866px;width:12px;height:12px;background:#36343c"></div><svg style="left:95.5px;top:867.5px" width="9" height="8" viewBox="0 0 9 8"><path d="M0.600 0v6.400h7" stroke="#1c1c1c" stroke-width="1.200" fill="none"/></svg><svg style="left:106px;top:864px" width="13" height="14" viewBox="0 0 13 14"><path d="M1 4V1h3M9 1h3v3M12 10v3H9M4 13H1v-3" fill="none" stroke="#3a4c70" stroke-width="1.100"/><path d="M3 4h3v2H3zM7.500 4.500h3v2h-3zM7.500 8.500h3v2h-3zM6 5h1.500M6.700 5v4.500h1" fill="#3a4c70" stroke="#3a4c70" stroke-width=".8"/></svg><div class="t" style="left:125.5px;top:851.0px;font-size:25px;line-height:38px;color:#000;">数据类型</div><div style="left:25px;top:906px;width:12px;height:12px;background:#36343c"></div><svg style="left:95.5px;top:907.5px" width="9" height="8" viewBox="0 0 9 8"><path d="M0.600 0v6.400h7" stroke="#1c1c1c" stroke-width="1.200" fill="none"/></svg><svg style="left:106px;top:904px" width="13" height="14" viewBox="0 0 13 14"><path d="M1 3v8h11V3" fill="none" stroke="#3a4c70" stroke-width="1"/><text x="6.500" y="9" font-size="6" font-family="Liberation Sans,sans-serif" font-weight="bold" fill="#3a4c70" text-anchor="middle">var</text></svg><div class="t" style="left:125.5px;top:891.0px;font-size:25px;line-height:38px;color:#000;">全局变量</div><div style="left:25px;top:946px;width:12px;height:12px;background:#36343c"></div><svg style="left:58.0px;top:945.5px" width="9" height="11" viewBox="0 0 9 11"><path d="M0 0V11L9 5.5z" fill="#000"/></svg><svg style="left:72px;top:944px" width="13" height="14" viewBox="0 0 13 14"><path d="M1 2h5l1 1.500h5V12H1z" fill="#3a4c70"/><path d="M3.500 6h6v4h-6zM6.500 6v4M3.500 8h6" stroke="#f6f6f6" stroke-width=".8" fill="none"/></svg><div class="t" style="left:91.5px;top:931.0px;font-size:25px;line-height:38px;color:#000;">任务</div><div style="left:7px;top:1288px;width:366px;height:40px;background:#eef0f6;border:2px solid #c6c6c6"></div><div style="left:12px;top:1294px;width:28px;height:28px;background:#37496c;border-radius:3px"></div><div class="t" style="left:12px;top:1296px;width:28px;text-align:center;font:bold 25px/28px 'Liberation Mono',monospace;color:#d8d8d8">i</div><div class="t" style="left:53px;top:1290.0px;font-size:24px;line-height:36px;color:#000;">筛选器</div><div style="left:340px;top:1294px;width:28px;height:28px;background:#eef0f6;border:2px solid #37496c;border-radius:4px"></div><svg style="left:344px;top:1297px" width="20" height="21" viewBox="0 0 20 21"><path d="M12 1l7 7-2 1-1-1-4 4 .5 4-2 1.500-4-4.500L2 19l-1 .5.500-1.200 5-5-4.500-4 1.500-2 4 .5 4-4-1-1z" fill="#37496c"/></svg><div style="left:388px;top:210px;width:1713px;height:1122px;background:#c6c6c6"></div><div style="left:388px;top:210px;width:1713px;height:45px;background:#f8f8f8"></div><div style="left:388px;top:210px;width:668px;height:49px;background:#72b6f1"></div><div style="left:388px;top:217px;width:364px;height:42px;background:#efefef"></div><div style="left:1056px;top:255px;width:1043px;height:4px;background:#72b6f1"></div><div style="left:388px;top:259px;width:1713px;height:1px;background:#cfcfcf"></div><svg style="left:395px;top:219px;filter:blur(.4px)" width="34" height="33" viewBox="0 0 34 33"><path d="M2 9V2h8M24 2h8v7M32 24v7h-8M10 31H2v-7" fill="none" stroke="#3a4c70" stroke-width="2"/><path d="M6 8h9v6H6zM19 9h9v6h-9zM19 19h9v6h-9z" fill="#3a4c70"/><path d="M15 11h4M17 11v11h3" fill="none" stroke="#3a4c70" stroke-width="2"/></svg><div class="t" style="left:436px;top:218.0px;font-size:24px;line-height:36px;color:#8a8a8a;">数据类型</div><svg style="left:577px;top:224px" width="34" height="24" viewBox="0 0 34 24"><path d="M1.500 1v21h31V1" fill="none" stroke="#3a4c70" stroke-width="2"/><text x="17" y="17" font-size="17" font-family="Liberation Sans,sans-serif" font-weight="bold" fill="#3a4c70" text-anchor="middle" textLength="22" lengthAdjust="spacingAndGlyphs">var</text></svg><div class="t" style="left:618px;top:218.0px;font-size:24px;line-height:36px;color:#8a8a8a;">全局变量</div><svg style="left:759px;top:222px;filter:blur(.4px)" width="34" height="28" viewBox="0 0 34 28"><path d="M7 2h18a2 2 0 0 1 2 2v5H5V4a2 2 0 0 1 2-2zM1 11h22v7H1zM5 20h22v5a2 2 0 0 1-2 2H7a2 2 0 0 1-2-2z" fill="#3a4c70"/><path d="M33 14.500l-6 3.500v-7z" fill="#3a4c70"/><path d="M3 14.500h16M8 23h14M4 7h5" stroke="#9dbfe6" stroke-width="1.600"/></svg><div class="t" style="left:800px;top:217.5px;font-size:24px;line-height:36px;color:#000;"><span style="font-size:0.99em">Section0 - Program0</span></div><svg style="left:1031px;top:227px" width="18" height="18" viewBox="0 0 18 18"><path d="M2 2l14 14M16 2L2 16" stroke="#000" stroke-width="3.200" fill="none"/></svg><svg style="left:2077.0px;top:233.5px" width="16" height="9" viewBox="0 0 16 9"><path d="M0 0H16L8.0 9z" fill="#000"/></svg><div style="left:390px;top:260px;width:1709px;height:37px;background:#eef0f6;border-radius:9px 9px 0 0;border-left:1px solid #d0d0d0;border-right:2px solid #bdbdbd"></div><div class="t" style="left:439px;top:263.5px;font-size:23px;line-height:34px;color:#000;">变量</div><svg style="left:2068px;top:273px" width="22" height="17" viewBox="0 0 22 17"><path d="M11 0L22 17H0z" fill="#4c4c4c"/></svg><div style="left:388px;top:297px;width:1713px;height:6px;background:#c9c9c9"></div><div style="left:392px;top:303px;width:36px;height:1025px;background:#eef0f6"></div><div style="left:428px;top:303px;width:2px;height:1025px;background:#bdbdbd"></div><div style="left:430px;top:303px;width:1637px;height:1025px;background:#fff"></div><div style="left:446px;top:303px;width:50px;height:993px;background:#72b6f1"></div><div class="t" style="left:71px;width:800px;text-align:center;top:302.5px;font-size:22px;line-height:34px;color:#000;">2</div><div class="t" style="left:396px;top:344px;width:28px;font-size:23px;line-height:28px;color:#4a4a4a;writing-mode:vertical-rl;text-orientation:sideways">行注释列表</div><div style="left:537px;top:303px;width:2px;height:992px;background:#000"></div><div style="left:1737px;top:303px;width:2px;height:992px;background:#000"></div><div style="left:537px;top:427px;width:286px;height:2px;background:#000"></div><div style="left:1104px;top:427px;width:634px;height:2px;background:#000"></div><div style="left:822px;top:332px;width:282px;height:970px;border:2px solid #000;border-bottom:none;background:#fff"></div><div style="left:430px;top:1296px;width:1637px;height:2px;background:#fff"></div><div class="t" style="left:563px;width:800px;text-align:center;top:301.0px;font-size:22px;line-height:34px;color:#000;">十五点</div><div class="t" style="left:563px;width:800px;text-align:center;top:331.0px;font-size:22px;line-height:34px;color:#000;"><span style="font-size:0.92em">FG_</span>电机</div><div class="t" style="left:828px;top:358.5px;font-size:22px;line-height:34px;color:#000;">状态</div><div class="t" style="left:828px;top:410.87px;font-size:22px;line-height:34px;color:#000;"><span style="font-size:0.92em">i_EN</span></div><div class="t" style="left:828px;top:463.24px;font-size:22px;line-height:34px;color:#000;"><span style="font-size:0.92em">i_</span>轴号</div><div class="t" style="right:1613px;top:515.61px;font-size:22px;line-height:34px;color:#000;">运行参数</div><div class="t" style="left:828px;top:567.98px;font-size:22px;line-height:34px;color:#000;"><span style="font-size:0.92em">i_</span>使能</div><div class="t" style="left:828px;top:620.3499999999999px;font-size:22px;line-height:34px;color:#000;"><span style="font-size:0.92em">i_</span>复位</div><div class="t" style="left:828px;top:672.72px;font-size:22px;line-height:34px;color:#000;"><span style="font-size:0.92em">i_</span>停止</div><div class="t" style="right:1600px;top:725.0899999999999px;font-size:22px;line-height:34px;color:#000;"><span style="font-size:0.92em">i_</span>通信正常</div><div class="t" style="right:1600px;top:777.46px;font-size:22px;line-height:34px;color:#000;"><span style="font-size:0.92em">i_</span>手动控制</div><div class="t" style="right:1600px;top:829.8299999999999px;font-size:22px;line-height:34px;color:#000;"><span style="font-size:0.92em">i_</span>延时时间</div><div class="t" style="right:1615px;top:882.1999999999999px;font-size:22px;line-height:34px;color:#000;">报警编码</div><div class="t" style="right:1612px;top:934.5699999999999px;font-size:22px;line-height:34px;color:#000;">点动向正</div><div class="t" style="right:1612px;top:986.9399999999999px;font-size:22px;line-height:34px;color:#000;">点动向负</div><div class="t" style="right:1576px;top:1039.31px;font-size:22px;line-height:34px;color:#000;"><span style="font-size:0.92em">i_</span>绝对值寸动</div><div class="t" style="left:828px;top:1091.6799999999998px;font-size:22px;line-height:34px;color:#000;"><span style="font-size:0.92em">i_</span>回零</div><div class="t" style="left:828px;top:1144.05px;font-size:22px;line-height:34px;color:#000;"><span style="font-size:0.92em">i_</span>急停</div><div class="t" style="right:1608px;top:1196.42px;font-size:22px;line-height:34px;color:#000;"><span style="font-size:0.92em">i_</span>轴安全</div><div class="t" style="right:1608px;top:1248.79px;font-size:22px;line-height:34px;color:#000;"><span style="font-size:0.92em">i_</span>轴停止</div><div class="t" style="right:1432px;top:358.5px;font-size:22px;line-height:34px;color:#000;"><span style="font-size:0.92em">POS</span></div><div style="left:1104px;top:374px;width:20px;height:2px;background:#000"></div><div class="t" style="left:1126px;top:358.5px;font-size:22px;line-height:34px;color:#8e8e8e;font-style:italic">输入变量</div><div class="t" style="right:1432px;top:410.87px;font-size:22px;line-height:34px;color:#000;"><span style="font-size:0.92em">oEN</span></div><div class="t" style="right:1432px;top:463.24px;font-size:22px;line-height:34px;color:#000;">轴运行</div><div style="left:1104px;top:479px;width:20px;height:2px;background:#000"></div><div class="t" style="left:1126px;top:463.24px;font-size:22px;line-height:34px;color:#8e8e8e;font-style:italic">输入变量</div><div class="t" style="right:1432px;top:515.61px;font-size:22px;line-height:34px;color:#000;">轴使能</div><div style="left:1104px;top:532px;width:20px;height:2px;background:#000"></div><div class="t" style="left:1126px;top:515.61px;font-size:22px;line-height:34px;color:#8e8e8e;font-style:italic">输入变量</div><div class="t" style="right:1432px;top:567.98px;font-size:22px;line-height:34px;color:#000;">轴复位完成</div><div style="left:1104px;top:584px;width:20px;height:2px;background:#000"></div><div class="t" style="left:1126px;top:567.98px;font-size:22px;line-height:34px;color:#8e8e8e;font-style:italic">输入变量</div><div class="t" style="right:1432px;top:620.3499999999999px;font-size:22px;line-height:34px;color:#000;">通信正常</div><div style="left:1104px;top:636px;width:20px;height:2px;background:#000"></div><div class="t" style="left:1126px;top:620.3499999999999px;font-size:22px;line-height:34px;color:#8e8e8e;font-style:italic">输入变量</div><div class="t" style="right:1432px;top:672.72px;font-size:22px;line-height:34px;color:#000;">当前位置</div><div style="left:1104px;top:689px;width:20px;height:2px;background:#000"></div><div class="t" style="left:1126px;top:672.72px;font-size:22px;line-height:34px;color:#8e8e8e;font-style:italic">输入变量</div><div class="t" style="right:1432px;top:725.0899999999999px;font-size:22px;line-height:34px;color:#000;">当前速度</div><div style="left:1104px;top:741px;width:20px;height:2px;background:#000"></div><div class="t" style="left:1126px;top:725.0899999999999px;font-size:22px;line-height:34px;color:#8e8e8e;font-style:italic">输入变量</div><div class="t" style="right:1432px;top:777.46px;font-size:22px;line-height:34px;color:#000;"><span style="font-size:0.92em">o_</span>轴刹车</div><div style="left:1104px;top:793px;width:20px;height:2px;background:#000"></div><div class="t" style="left:1126px;top:777.46px;font-size:22px;line-height:34px;color:#8e8e8e;font-style:italic">输入变量</div><div class="t" style="right:1432px;top:829.8299999999999px;font-size:22px;line-height:34px;color:#000;"><span style="font-size:0.92em">o_</span>轴报警总</div><div style="left:1104px;top:846px;width:20px;height:2px;background:#000"></div><div class="t" style="left:1126px;top:829.8299999999999px;font-size:22px;line-height:34px;color:#8e8e8e;font-style:italic">输入变量</div><div class="t" style="right:1432px;top:882.1999999999999px;font-size:22px;line-height:34px;color:#000;"><span style="font-size:0.92em">o_</span>轴报警</div><div style="left:1104px;top:898px;width:20px;height:2px;background:#000"></div><div class="t" style="left:1126px;top:882.1999999999999px;font-size:22px;line-height:34px;color:#8e8e8e;font-style:italic">输入变量</div><div class="t" style="right:1432px;top:934.5699999999999px;font-size:22px;line-height:34px;color:#000;"><span style="font-size:0.92em">o_</span>轴不安全</div><div style="left:1104px;top:951px;width:20px;height:2px;background:#000"></div><div class="t" style="left:1126px;top:934.5699999999999px;font-size:22px;line-height:34px;color:#8e8e8e;font-style:italic">输入变量</div><div class="t" style="right:1432px;top:986.9399999999999px;font-size:22px;line-height:34px;color:#000;"><span style="font-size:0.92em">o_</span>轴正极限</div><div style="left:1104px;top:1003px;width:20px;height:2px;background:#000"></div><div class="t" style="left:1126px;top:986.9399999999999px;font-size:22px;line-height:34px;color:#8e8e8e;font-style:italic">输入变量</div><div class="t" style="right:1432px;top:1039.31px;font-size:22px;line-height:34px;color:#000;"><span style="font-size:0.92em">o_</span>轴负极限</div><div style="left:1104px;top:1055px;width:20px;height:2px;background:#000"></div><div class="t" style="left:1126px;top:1039.31px;font-size:22px;line-height:34px;color:#8e8e8e;font-style:italic">输入变量</div><div class="t" style="right:1432px;top:1091.6799999999998px;font-size:22px;line-height:34px;color:#000;"><span style="font-size:0.92em">o_</span>轴未使能</div><div style="left:1104px;top:1108px;width:20px;height:2px;background:#000"></div><div class="t" style="left:1126px;top:1091.6799999999998px;font-size:22px;line-height:34px;color:#8e8e8e;font-style:italic">输入变量</div><div class="t" style="right:1432px;top:1144.05px;font-size:22px;line-height:34px;color:#000;"><span style="font-size:0.92em">o_</span>轴未复位</div><div style="left:1104px;top:1160px;width:20px;height:2px;background:#000"></div><div class="t" style="left:1126px;top:1144.05px;font-size:22px;line-height:34px;color:#8e8e8e;font-style:italic">输入变量</div><div class="t" style="right:1432px;top:1196.42px;font-size:22px;line-height:34px;color:#000;"><span style="font-size:0.92em">o_</span>轴复位超时</div><div style="left:1104px;top:1212px;width:20px;height:2px;background:#000"></div><div class="t" style="left:1126px;top:1196.42px;font-size:22px;line-height:34px;color:#8e8e8e;font-style:italic">输入变量</div><div class="t" style="right:1730px;top:357.5px;font-size:22px;line-height:34px;color:#b01860;"><span style="font-size:0.92em">G_State[1]</span></div><div style="left:801px;top:374px;width:22px;height:2px;background:#000"></div><div class="t" style="right:1730px;top:463.24px;font-size:22px;line-height:34px;color:#b01860;">搬运<span style="font-size:0.92em">Z</span>轴</div><div style="left:801px;top:479px;width:22px;height:2px;background:#000"></div><div style="left:2067px;top:303px;width:30px;height:1025px;background:#ececec"></div><div style="left:2067px;top:303px;width:30px;height:16px;background:#dadada;border-top:2px solid #fff;border-left:2px solid #fff;border-right:2px solid #8a8a8a;border-bottom:3px solid #8a8a8a"></div><svg style="left:2067px;top:321px;background:#b9bdcf" width="30" height="30" viewBox="0 0 30 30"><path d="M8 19l7-8 7 8" fill="none" stroke="#82848f" stroke-width="3"/></svg><svg style="left:2067px;top:1265px;background:#b9bdcf" width="30" height="30" viewBox="0 0 30 30"><path d="M8 11l7 8 7-8" fill="none" stroke="#82848f" stroke-width="3"/></svg><div style="left:2074px;top:888px;width:17px;height:220px;background:#e1e1e1;border:2px solid #c0c0c0"></div><div style="left:438px;top:1298px;width:1625px;height:30px;background:#ececec"></div><svg style="left:438px;top:1298px;background:#e1e4ec" width="30" height="30" viewBox="0 0 30 30"><path d="M19 8l-8 7 8 7" fill="none" stroke="#b9bac2" stroke-width="3"/></svg><svg style="left:2033px;top:1298px;background:#e1e4ec" width="30" height="30" viewBox="0 0 30 30"><path d="M11 8l8 7-8 7" fill="none" stroke="#c3c4cc" stroke-width="3"/></svg><svg style="left:402px;top:1299px" width="17" height="22" viewBox="0 0 17 22"><path d="M17 0V22L0 11z" fill="#f6f7fa"/></svg><div style="left:2097px;top:303px;width:4px;height:993px;background:#c6c6c6"></div><div style="left:2065px;top:1297px;width:34px;height:33px;background:#333"></div><div style="left:2113px;top:210px;width:400px;height:1122px;background:#f8f8f8;border:2px solid #bdbdbd"></div><div style="left:2115px;top:212px;width:396px;height:41px;background:#eef0f6"></div><div style="left:2115px;top:253px;width:396px;height:6px;background:#bcbcbc;border-radius:7px 7px 0 0"></div><div style="left:2115px;top:258px;width:396px;height:870px;background:#f8f8f8"></div><div class="t" style="left:2123px;top:214.5px;font-size:24px;line-height:36px;color:#000;">工具箱</div><svg style="left:2209px;top:227.4px" width="228" height="11" viewBox="0 0 228 11"><defs><pattern id="dp2209" width="8" height="8" patternUnits="userSpaceOnUse"><rect x="0" y="0" width="2" height="2.400" fill="#6a6a6a"/><rect x="4" y="4" width="2" height="2.400" fill="#6a6a6a"/></pattern></defs><rect width="228" height="10.400" fill="url(#dp2209)"/></svg><svg style="left:2453.0px;top:231.5px" width="16" height="9" viewBox="0 0 16 9"><path d="M0 0H16L8.0 9z" fill="#000"/></svg><svg style="left:2484px;top:221px" width="16" height="22" viewBox="0 0 16 22"><path d="M3 1h10v12h2v2.500H9.200V21H6.800v-5.500H1V13h2z" fill="#000"/><rect x="5.200" y="3.500" width="3.800" height="9.500" fill="#eef0f6"/></svg><div style="left:2119px;top:263px;width:253px;height:40px;background:#fff;border:2px solid #000"></div><div class="t" style="left:2130px;top:265.0px;font-size:24px;line-height:36px;color:#000;"><span style="font-size:1.1em">&lt;</span> 检索 <span style="font-size:1.1em">&gt;</span></div><div style="left:2370px;top:263px;width:41px;height:40px;background:linear-gradient(#fafbfc,#eceef3 40%,#c5cbd9);border:2px solid #6e6e6e"></div><svg style="left:2382.5px;top:277.5px" width="17" height="11" viewBox="0 0 17 11"><path d="M0 0H17L8.5 11z" fill="#000"/></svg><div style="left:2419px;top:263px;width:40px;height:40px;background:linear-gradient(#fafbfc,#eceef3 40%,#c5cbd9);border:2px solid #6e6e6e"></div><svg style="left:2427px;top:271px" width="24" height="24" viewBox="0 0 24 24"><circle cx="14.500" cy="9" r="6" fill="none" stroke="#9a9da5" stroke-width="2.400"/><path d="M10 13.500L3 21" stroke="#9a9da5" stroke-width="3" stroke-linecap="round"/></svg><div style="left:2467px;top:263px;width:40px;height:40px;background:linear-gradient(#fafbfc,#eceef3 40%,#c5cbd9);border:2px solid #6e6e6e"></div><svg style="left:2476px;top:272px" width="22" height="22" viewBox="0 0 22 22"><path d="M2 2l18 18M20 2L2 20" stroke="#9a9da5" stroke-width="3.200"/></svg><div style="left:2115px;top:307px;width:362px;height:54px;background:#f4f4f8"></div><div style="left:2117px;top:310px;width:358px;height:50px;background:linear-gradient(#fdfdfe 0%,#eef0f4 32%,#d6dae5 70%,#c4cad9 100%);border:2px solid #b6b7bc;border-radius:11px"></div><svg style="left:2127.0px;top:325.5px" width="16" height="19" viewBox="0 0 16 19"><path d="M0 0V19L16 9.5z" fill="#000"/></svg><div class="t" style="left:2163px;top:316.0px;font-size:25.5px;line-height:38px;color:#000;letter-spacing:0.32px">Analog Conversion</div><div style="left:2115px;top:361px;width:362px;height:54px;background:#ededf1"></div><div style="left:2117px;top:364px;width:358px;height:50px;background:linear-gradient(#fdfdfe 0%,#eef0f4 32%,#d6dae5 70%,#c4cad9 100%);border:2px solid #b6b7bc;border-radius:11px"></div><svg style="left:2127.0px;top:379.5px" width="16" height="19" viewBox="0 0 16 19"><path d="M0 0V19L16 9.5z" fill="#000"/></svg><div class="t" style="left:2163px;top:370.0px;font-size:25.5px;line-height:38px;color:#000;letter-spacing:-0.15px">BCD Conversion</div><div style="left:2115px;top:416px;width:362px;height:54px;background:#f4f4f8"></div><div style="left:2117px;top:419px;width:358px;height:50px;background:linear-gradient(#fdfdfe 0%,#eef0f4 32%,#d6dae5 70%,#c4cad9 100%);border:2px solid #b6b7bc;border-radius:11px"></div><svg style="left:2127.0px;top:434.5px" width="16" height="19" viewBox="0 0 16 19"><path d="M0 0V19L16 9.5z" fill="#000"/></svg><div class="t" style="left:2163px;top:425.0px;font-size:25.5px;line-height:38px;color:#000;letter-spacing:0.11px">Bit String Processing</div><div style="left:2115px;top:471px;width:362px;height:54px;background:#ededf1"></div><div style="left:2117px;top:474px;width:358px;height:50px;background:linear-gradient(#fdfdfe 0%,#eef0f4 32%,#d6dae5 70%,#c4cad9 100%);border:2px solid #b6b7bc;border-radius:11px"></div><svg style="left:2127.0px;top:489.5px" width="16" height="19" viewBox="0 0 16 19"><path d="M0 0V19L16 9.5z" fill="#000"/></svg><div class="t" style="left:2163px;top:480.0px;font-size:25.5px;line-height:38px;color:#000;letter-spacing:0.49px">Communications</div><div style="left:2115px;top:525px;width:362px;height:54px;background:#f4f4f8"></div><div style="left:2117px;top:528px;width:358px;height:50px;background:linear-gradient(#fdfdfe 0%,#eef0f4 32%,#d6dae5 70%,#c4cad9 100%);border:2px solid #b6b7bc;border-radius:11px"></div><svg style="left:2127.0px;top:543.5px" width="16" height="19" viewBox="0 0 16 19"><path d="M0 0V19L16 9.5z" fill="#000"/></svg><div class="t" style="left:2163px;top:534.0px;font-size:25.5px;line-height:38px;color:#000;letter-spacing:0.44px">Comparison</div><div style="left:2115px;top:579px;width:362px;height:54px;background:#ededf1"></div><div style="left:2117px;top:582px;width:358px;height:50px;background:linear-gradient(#fdfdfe 0%,#eef0f4 32%,#d6dae5 70%,#c4cad9 100%);border:2px solid #b6b7bc;border-radius:11px"></div><svg style="left:2127.0px;top:597.5px" width="16" height="19" viewBox="0 0 16 19"><path d="M0 0V19L16 9.5z" fill="#000"/></svg><div class="t" style="left:2163px;top:588.0px;font-size:25.5px;line-height:38px;color:#000;letter-spacing:0.28px">Conversion</div><div style="left:2115px;top:634px;width:362px;height:54px;background:#f4f4f8"></div><div style="left:2117px;top:637px;width:358px;height:50px;background:linear-gradient(#fdfdfe 0%,#eef0f4 32%,#d6dae5 70%,#c4cad9 100%);border:2px solid #b6b7bc;border-radius:11px"></div><svg style="left:2127.0px;top:652.5px" width="16" height="19" viewBox="0 0 16 19"><path d="M0 0V19L16 9.5z" fill="#000"/></svg><div class="t" style="left:2163px;top:643.0px;font-size:25.5px;line-height:38px;color:#000;letter-spacing:0.81px">Counter</div><div style="left:2115px;top:689px;width:362px;height:54px;background:#ededf1"></div><div style="left:2117px;top:692px;width:358px;height:50px;background:linear-gradient(#fdfdfe 0%,#eef0f4 32%,#d6dae5 70%,#c4cad9 100%);border:2px solid #b6b7bc;border-radius:11px"></div><svg style="left:2127.0px;top:707.5px" width="16" height="19" viewBox="0 0 16 19"><path d="M0 0V19L16 9.5z" fill="#000"/></svg><div class="t" style="left:2163px;top:698.0px;font-size:25.5px;line-height:38px;color:#000;letter-spacing:0.67px">Data Movement</div><div style="left:2115px;top:743px;width:362px;height:54px;background:#f4f4f8"></div><div style="left:2117px;top:746px;width:358px;height:50px;background:linear-gradient(#fdfdfe 0%,#eef0f4 32%,#d6dae5 70%,#c4cad9 100%);border:2px solid #b6b7bc;border-radius:11px"></div><svg style="left:2127.0px;top:761.5px" width="16" height="19" viewBox="0 0 16 19"><path d="M0 0V19L16 9.5z" fill="#000"/></svg><div class="t" style="left:2163px;top:752.0px;font-size:25.5px;line-height:38px;color:#000;letter-spacing:0.14px">Data Type Conversion</div><div style="left:2115px;top:797px;width:362px;height:54px;background:#ededf1"></div><div style="left:2117px;top:800px;width:358px;height:50px;background:linear-gradient(#fdfdfe 0%,#eef0f4 32%,#d6dae5 70%,#c4cad9 100%);border:2px solid #b6b7bc;border-radius:11px"></div><svg style="left:2127.0px;top:815.5px" width="16" height="19" viewBox="0 0 16 19"><path d="M0 0V19L16 9.5z" fill="#000"/></svg><div class="t" style="left:2163px;top:806.0px;font-size:25.5px;line-height:38px;color:#000;letter-spacing:-1.20px">FCS</div><div style="left:2115px;top:852px;width:362px;height:54px;background:#f4f4f8"></div><div style="left:2117px;top:855px;width:358px;height:50px;background:linear-gradient(#fdfdfe 0%,#eef0f4 32%,#d6dae5 70%,#c4cad9 100%);border:2px solid #b6b7bc;border-radius:11px"></div><svg style="left:2127.0px;top:870.5px" width="16" height="19" viewBox="0 0 16 19"><path d="M0 0V19L16 9.5z" fill="#000"/></svg><div class="t" style="left:2163px;top:861.0px;font-size:25.5px;line-height:38px;color:#000;letter-spacing:2.00px">Math</div><div style="left:2115px;top:907px;width:362px;height:54px;background:#ededf1"></div><div style="left:2117px;top:910px;width:358px;height:50px;background:linear-gradient(#fdfdfe 0%,#eef0f4 32%,#d6dae5 70%,#c4cad9 100%);border:2px solid #b6b7bc;border-radius:11px"></div><svg style="left:2127.0px;top:925.5px" width="16" height="19" viewBox="0 0 16 19"><path d="M0 0V19L16 9.5z" fill="#000"/></svg><div class="t" style="left:2163px;top:916.0px;font-size:25.5px;line-height:38px;color:#000;letter-spacing:0.99px">Motion Control</div><div style="left:2115px;top:961px;width:362px;height:54px;background:#f4f4f8"></div><div style="left:2117px;top:964px;width:358px;height:50px;background:linear-gradient(#fdfdfe 0%,#eef0f4 32%,#d6dae5 70%,#c4cad9 100%);border:2px solid #b6b7bc;border-radius:11px"></div><svg style="left:2127.0px;top:979.5px" width="16" height="19" viewBox="0 0 16 19"><path d="M0 0V19L16 9.5z" fill="#000"/></svg><div class="t" style="left:2163px;top:970.0px;font-size:25.5px;line-height:38px;color:#000;letter-spacing:1.13px">Other</div><div style="left:2115px;top:1015px;width:362px;height:54px;background:#ededf1"></div><div style="left:2117px;top:1018px;width:358px;height:50px;background:linear-gradient(#fdfdfe 0%,#eef0f4 32%,#d6dae5 70%,#c4cad9 100%);border:2px solid #b6b7bc;border-radius:11px"></div><svg style="left:2127.0px;top:1033.5px" width="16" height="19" viewBox="0 0 16 19"><path d="M0 0V19L16 9.5z" fill="#000"/></svg><div class="t" style="left:2163px;top:1024.0px;font-size:25.5px;line-height:38px;color:#000;letter-spacing:0.55px">Program Control</div><div style="left:2115px;top:1070px;width:362px;height:54px;background:#f4f4f8"></div><div style="left:2117px;top:1073px;width:358px;height:50px;background:linear-gradient(#fdfdfe 0%,#eef0f4 32%,#d6dae5 70%,#c4cad9 100%);border:2px solid #b6b7bc;border-radius:11px"></div><svg style="left:2127.0px;top:1088.5px" width="16" height="19" viewBox="0 0 16 19"><path d="M0 0V19L16 9.5z" fill="#000"/></svg><div class="t" style="left:2163px;top:1079.0px;font-size:25.5px;line-height:38px;color:#000;letter-spacing:0.16px">SD Memory Card</div><div style="left:2479px;top:309px;width:30px;height:812px;background:#ececec"></div><svg style="left:2479px;top:309px;background:#b9bdcf" width="30" height="30" viewBox="0 0 30 30"><path d="M8 19l7-8 7 8" fill="none" stroke="#82848f" stroke-width="3"/></svg><svg style="left:2479px;top:1090px;background:#b9bdcf" width="30" height="30" viewBox="0 0 30 30"><path d="M8 11l7 8 7-8" fill="none" stroke="#82848f" stroke-width="3"/></svg><div style="left:2485px;top:343px;width:18px;height:381px;background:#e1e1e1;border:2px solid #c0c0c0"></div><div style="left:2117px;top:1125px;width:392px;height:3px;background:#000"></div><div style="left:2115px;top:1128px;width:396px;height:202px;background:#f8f8f8"></div><div style="left:476px;top:509px;width:435px;height:837px;background:linear-gradient(rgba(0,0,0,.35),#000 7px);border-radius:7px;filter:blur(.7px)"></div><div style="left:469px;top:504px;width:438px;height:837px;background:linear-gradient(#f8f8f8 0%,#f4f4f6 40%,#ecedf3 75%,#e6e8f0 100%);border-radius:5px;border-left:2px solid #b6b6b6;border-top:2px solid #b6b6b6;border-right:2px solid #c6c6c6"></div><div style="left:531px;top:595px;width:374px;height:2px;background:#d2d2d2"></div><div style="left:531px;top:817px;width:374px;height:2px;background:#d2d2d2"></div><div style="left:531px;top:912px;width:374px;height:2px;background:#d2d2d2"></div><div style="left:531px;top:965px;width:374px;height:2px;background:#d2d2d2"></div><div style="left:531px;top:1060px;width:374px;height:2px;background:#d2d2d2"></div><div style="left:531px;top:1197px;width:374px;height:2px;background:#d2d2d2"></div><div style="left:531px;top:1249px;width:374px;height:2px;background:#d2d2d2"></div><div class="t" style="left:507px;top:509.0px;font-size:24px;line-height:36px;color:#000;">插入回路(向上)(O)</div><div class="t" style="left:720px;top:509.0px;font-size:24px;line-height:36px;color:#000;letter-spacing:.75px"><span style="font-size:1.03em">Shift+R</span></div><div class="t" style="left:507px;top:552.5px;font-size:24px;line-height:36px;color:#000;">插入回路(向下)(W)</div><div class="t" style="left:720px;top:552.5px;font-size:24px;line-height:36px;color:#000;letter-spacing:.75px"><span style="font-size:1.03em">R</span></div><div class="t" style="left:507px;top:604.0px;font-size:24px;line-height:36px;color:#000;">剪切(T)</div><div class="t" style="left:720px;top:604.0px;font-size:24px;line-height:36px;color:#000;letter-spacing:.75px"><span style="font-size:1.03em">Ctrl+X</span></div><div style="left:473px;top:645px;width:430px;height:39px;background:#72b6f1"></div><div class="t" style="left:507px;top:646.5px;font-size:24px;line-height:36px;color:#000;">复制(C)</div><div class="t" style="left:720px;top:646.5px;font-size:24px;line-height:36px;color:#000;letter-spacing:.75px"><span style="font-size:1.03em">Ctrl+C</span></div><div class="t" style="left:507px;top:689.5px;font-size:24px;line-height:36px;color:#000;">带有副本复制</div><div class="t" style="left:720px;top:689.5px;font-size:24px;line-height:36px;color:#000;letter-spacing:.75px"><span style="font-size:1.03em">Ctrl+Shift+C</span></div><div class="t" style="left:507px;top:732.0px;font-size:24px;line-height:36px;color:#000;">粘贴(P)</div><div class="t" style="left:720px;top:732.0px;font-size:24px;line-height:36px;color:#000;letter-spacing:.75px"><span style="font-size:1.03em">Ctrl+V</span></div><div class="t" style="left:507px;top:774.5px;font-size:24px;line-height:36px;color:#000;">删除(D)</div><div class="t" style="left:720px;top:774.5px;font-size:24px;line-height:36px;color:#000;letter-spacing:.75px"><span style="font-size:1.03em">Delete</span></div><div class="t" style="left:507px;top:827.0px;font-size:24px;line-height:36px;color:#a9a9a9;">撤销(U)</div><div class="t" style="left:720px;top:827.0px;font-size:24px;line-height:36px;color:#a9a9a9;letter-spacing:.75px"><span style="font-size:1.03em">Ctrl+Z</span></div><div class="t" style="left:507px;top:869.0px;font-size:24px;line-height:36px;color:#000;">重做(R)</div><div class="t" style="left:720px;top:869.0px;font-size:24px;line-height:36px;color:#000;letter-spacing:.75px"><span style="font-size:1.03em">Ctrl+Y</span></div><div class="t" style="left:507px;top:922.0px;font-size:24px;line-height:36px;color:#000;">全选(A)</div><div class="t" style="left:720px;top:922.0px;font-size:24px;line-height:36px;color:#000;letter-spacing:.75px"><span style="font-size:1.03em">Ctrl+A</span></div><div class="t" style="left:507px;top:974.5px;font-size:24px;line-height:36px;color:#000;">跳转(G)</div><svg style="left:882.0px;top:986.0px" width="9" height="13" viewBox="0 0 9 13"><path d="M0 0V13L9 6.5z" fill="#000"/></svg><div class="t" style="left:507px;top:1017.5px;font-size:24px;line-height:36px;color:#a9a9a9;">转到上层</div><div class="t" style="left:720px;top:1017.5px;font-size:24px;line-height:36px;color:#a9a9a9;letter-spacing:.75px"><span style="font-size:1.03em">Ctrl+Shift+P</span></div><div class="t" style="left:507px;top:1069.5px;font-size:24px;line-height:36px;color:#000;">编辑回路注释</div><div class="t" style="left:720px;top:1069.5px;font-size:24px;line-height:36px;color:#000;letter-spacing:.75px"><span style="font-size:1.03em">Enter F2</span></div><div class="t" style="left:507px;top:1112.5px;font-size:24px;line-height:36px;color:#000;">显示行注释列表(L)</div><div class="t" style="left:720px;top:1112.5px;font-size:24px;line-height:36px;color:#000;letter-spacing:.75px"><span style="font-size:1.03em">L Alt+Shift+R</span></div><div class="t" style="left:507px;top:1154.5px;font-size:24px;line-height:36px;color:#a9a9a9;">隐藏行注释列表(H)</div><div class="t" style="left:720px;top:1154.5px;font-size:24px;line-height:36px;color:#a9a9a9;letter-spacing:.75px"><span style="font-size:1.03em">Shift+L</span></div><div class="t" style="left:507px;top:1207.0px;font-size:24px;line-height:36px;color:#000;">在线编辑(E)</div><svg style="left:882.0px;top:1218.5px" width="9" height="13" viewBox="0 0 9 13"><path d="M0 0V13L9 6.5z" fill="#000"/></svg><div class="t" style="left:507px;top:1259.5px;font-size:24px;line-height:36px;color:#000;">标签(M)</div><svg style="left:882.0px;top:1271.0px" width="9" height="13" viewBox="0 0 9 13"><path d="M0 0V13L9 6.5z" fill="#000"/></svg><div class="t" style="left:507px;top:1302.5px;font-size:24px;line-height:36px;color:#000;">插入跳转标签(J)</div></div></body></html>
